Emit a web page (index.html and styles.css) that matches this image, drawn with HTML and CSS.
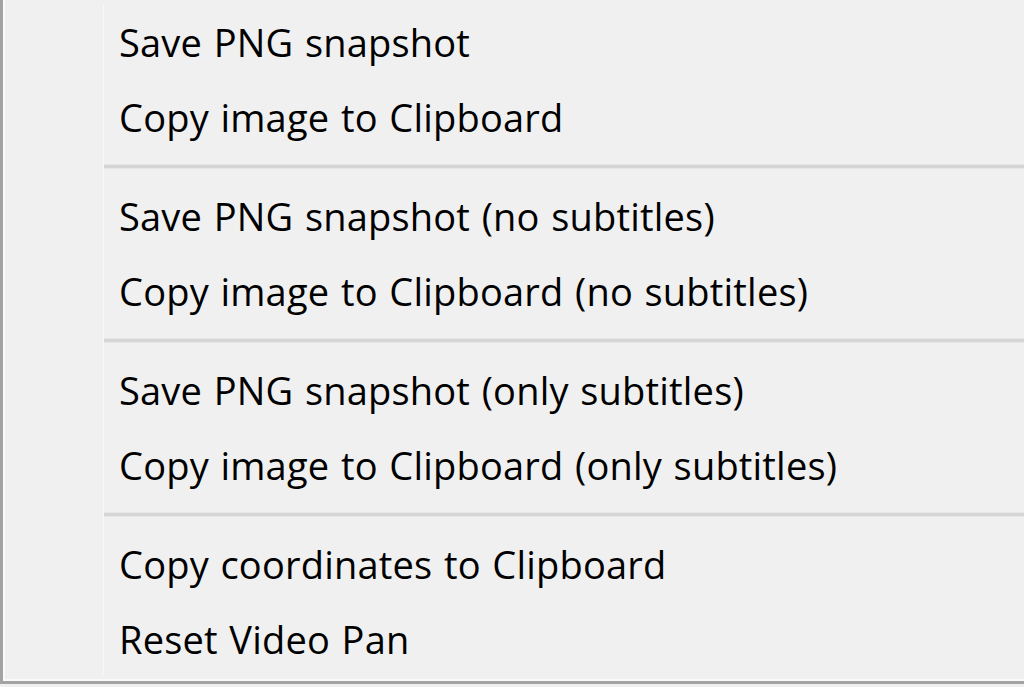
FILE: index.html
```html
<!DOCTYPE html>
<html lang="en">
<head>
    <meta charset="UTF-8">
    <title>Context menu</title>
    <link rel="stylesheet" href="styles.css">
</head>
<body>
    <div class="menu">
        <div class="menu-inner">
            <div class="gutter"></div>
            <ul class="items">
                <li class="item">Save PNG snapshot</li>
                <li class="item">Copy image to Clipboard</li>
                <li class="sep"></li>
                <li class="item">Save PNG snapshot (no subtitles)</li>
                <li class="item">Copy image to Clipboard (no subtitles)</li>
                <li class="sep"></li>
                <li class="item">Save PNG snapshot (only subtitles)</li>
                <li class="item">Copy image to Clipboard (only subtitles)</li>
                <li class="sep"></li>
                <li class="item">Copy coordinates to Clipboard</li>
                <li class="item">Reset Video Pan</li>
            </ul>
        </div>
    </div>
</body>
</html>
```

FILE: styles.css
```css
body {
    margin: 0;
    padding: 0;
    background-color: #f0f0f0;
    overflow: hidden;
}

.menu {
    height: 684px;
    box-sizing: border-box;
    background-color: #f0f0f0;
    border-left: 3px solid #a3a3a3;
    border-bottom: 3px solid #a3a3a3;
    box-shadow: inset 2px -2px 0 #fafafa;
    padding: 0 0 7px 2px;
}

.menu-inner {
    display: flex;
    height: 100%;
}

.gutter {
    width: 98px;
    margin: 5px 0 0 0;
    border-right: 1px solid #f8f8f8;
}

.items {
    list-style: none;
    margin: 0;
    padding: 5px 0 0 0;
    flex: 1;
    font-family: "Open Sans", "Noto Sans", sans-serif;
    font-size: 38px;
    letter-spacing: 0.2px;
    word-spacing: 1.5px;
    color: #000;
}

.item {
    height: 74.5px;
    line-height: 74.5px;
    padding-left: 15px;
    white-space: nowrap;
}

.sep {
    height: 25px;
    display: flex;
    align-items: center;
}

.sep::before {
    content: "";
    display: block;
    width: 100%;
    height: 3px;
    background-color: #d5d5d5;
    box-shadow: 0 1px 0 #e6e6e6, 0 -1px 0 #e6e6e6;
}
```
